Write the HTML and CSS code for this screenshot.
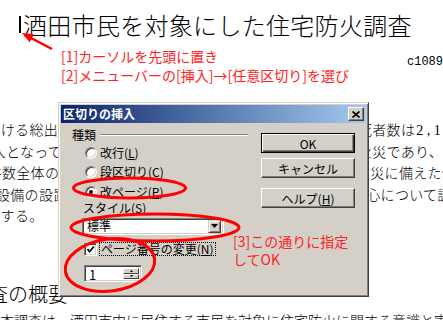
FILE: index.html
```html
<!DOCTYPE html>
<html lang="ja">
<head>
<meta charset="utf-8">
<title>区切りの挿入</title>
<link rel="stylesheet" href="styles.css">
</head>
<body>
<div class="page">
  <h1 class="doc-title"><span class="caret"></span>酒田市民を対象にした住宅防火調査</h1>
  <div class="notes">
    <div class="note-row"><span class="note">[1]カーソルを先頭に置き</span><span class="code">c1089</span></div>
    <div class="note-row"><span class="note">[2]メニューバーの[挿入]→[任意区切り]を選び</span></div>
  </div>
  <div class="para">
    <div class="ln"><span class="lt in1">おける総出火件数のうち住宅火災による</span><span class="rt">死者数は<span class="num">2,153</span>人</span></div>
    <div class="ln"><span class="lt in2">人となっており、その多くが住宅</span><span class="rt">火災であり、住宅</span></div>
    <div class="ln"><span class="lt in3">件数全体の半数を占める住宅</span><span class="rt sh3">火災に備えた住宅</span></div>
    <div class="ln"><span class="lt in4">設備の設置状況と防火意識を</span><span class="rt sh4">中心について調べ</span></div>
    <div class="ln"><span class="lt in5">とする。</span><span class="rt"></span></div>
  </div>
  <h2 class="doc-sub">調査の概要</h2>
  <p class="last">本調査は、酒田市内に居住する市民を対象に住宅防火に関する意識と実態を調べたものである。</p>

  <div class="dialog">
    <div class="titlebar">
      <span class="title">区切りの挿入</span>
      <span class="close"><svg width="8" height="7" viewBox="0 0 8 7"><path d="M0.5 0.5 L7.5 6.5 M7.5 0.5 L0.5 6.5" stroke="#000" stroke-width="1.7" fill="none"/></svg></span>
    </div>
    <div class="dlg-body">
      <div class="dlg-left">
        <div class="group-head"><span>種類</span><span class="etch"></span></div>
        <div class="radios">
          <div class="opt"><span class="radio"></span><span>改行(<u>L</u>)</span></div>
          <div class="opt"><span class="radio"></span><span>段区切り(<u>C</u>)</span></div>
          <div class="opt"><span class="radio on"></span><span>改ページ(<u>P</u>)</span></div>
        </div>
        <div class="field-label">スタイル(<u>S</u>)</div>
        <div class="combo">
          <span class="combo-val">標準</span>
          <span class="drop"><svg width="7" height="4" viewBox="0 0 7 4"><path d="M0 0 H7 L3.5 4 Z" fill="#000"/></svg></span>
        </div>
        <div class="check-row">
          <span class="checkbox"><svg width="9" height="9" viewBox="0 0 9 9"><polyline points="1.5,4 3.5,6.5 8,1.5" fill="none" stroke="#000" stroke-width="1.8"/></svg></span>
          <span class="focus">ページ番号の変更(<u>N</u>)</span>
        </div>
        <div class="spin">
          <span class="spin-val">1</span>
          <span class="spin-btns">
            <span class="sb"><svg width="3" height="2" viewBox="0 0 3 2"><path d="M1.5 0 L3 2 H0 Z" fill="#000"/></svg></span>
            <span class="sb"><svg width="3" height="2" viewBox="0 0 3 2"><path d="M0 0 H3 L1.5 2 Z" fill="#000"/></svg></span>
          </span>
        </div>
      </div>
      <div class="dlg-right">
        <button class="btn default">OK</button>
        <button class="btn">キャンセル</button>
        <button class="btn help">ヘルプ(<u>H</u>)</button>
      </div>
    </div>
  </div>

  <svg class="marks" width="443" height="320" viewBox="0 0 443 320">
    <line x1="52" y1="49" x2="31" y2="38" stroke="#f00" stroke-width="2.5"/>
    <polygon points="22,33 33.8,34.2 29.6,42.2" fill="#f00"/>
    <ellipse cx="129.5" cy="188" rx="56" ry="10" fill="none" stroke="#f00" stroke-width="3"/>
    <ellipse cx="155" cy="227.5" rx="84" ry="13.5" fill="none" stroke="#f00" stroke-width="3"/>
    <ellipse cx="110" cy="265" rx="45" ry="26" fill="none" stroke="#f00" stroke-width="3" transform="rotate(-8 110 265)"/>
  </svg>
  <div class="note3">[3]この通りに指定<br>してOK</div>
</div>
</body>
</html>
```
FILE: styles.css
```css
* { box-sizing: border-box; }
html, body { margin: 0; padding: 0; background: #fff; }
body { font-family: "Noto Sans CJK JP", sans-serif; }

.page {
  position: relative;
  width: 443px;
  height: 320px;
  overflow: hidden;
  color: #000;
}

/* document */
.doc-title {
  margin: 0;
  padding: 12px 0 0 19px;
  display: flex;
  font-family: "Liberation Serif", "Noto Sans CJK JP", serif;
  font-size: 24px;
  line-height: 30px;
  font-weight: 300;
  letter-spacing: 0.3px;
  white-space: nowrap;
}
.caret {
  align-self: flex-start;
  width: 2px;
  height: 17px;
  margin-top: 4px;
  margin-right: 2px;
  background: #000;
}

.notes {
  margin-top: 5px;
  padding-left: 61px;
  color: #f22;
  font-size: 14px;
  line-height: 18.5px;
}
.note-row {
  display: flex;
  justify-content: space-between;
  white-space: nowrap;
}
.code {
  align-self: flex-end;
  margin-bottom: -2px;
  color: #000;
  font-family: "Liberation Mono", monospace;
  font-size: 12px;
  line-height: 12px;
}

.para {
  margin-top: 36px;
  font-family: "Liberation Serif", "Noto Sans CJK JP", serif;
  font-size: 14px;
  line-height: 21.6px;
  font-weight: 300;
  letter-spacing: 0.3px;
}
.ln {
  display: grid;
  grid-template-columns: 358px 1fr;
  white-space: nowrap;
}
.lt, .rt { overflow: hidden; }
.num { margin-left: 1px; letter-spacing: 3.5px; }
.in1 { text-indent: -13.5px; }
.in2 { text-indent: -8.3px; }
.in3 { text-indent: -12.3px; }
.in4 { text-indent: -4px; }
.in5 { text-indent: -13.3px; }
.sh3 { text-indent: -2px; }
.sh4 { text-indent: -6px; }

.doc-sub {
  margin: 52px 0 0;
  font-family: "Liberation Serif", "Noto Sans CJK JP", serif;
  font-size: 20px;
  line-height: 30px;
  font-weight: 300;
  text-indent: -32px;
  white-space: nowrap;
}
.last {
  margin: 1px 0 0;
  font-family: "Liberation Serif", "Noto Sans CJK JP", serif;
  font-size: 14px;
  line-height: 21.6px;
  font-weight: 300;
  white-space: nowrap;
}

/* dialog */
.dialog {
  position: absolute;
  left: 58px;
  top: 102px;
  width: 311px;
  height: 195px;
  padding: 2px;
  display: flex;
  flex-direction: column;
  background: #d4d0c8;
  border: 1px solid;
  border-color: #d4d0c8 #404040 #404040 #d4d0c8;
  box-shadow: inset 1px 1px #fff, inset -1px -1px #808080;
  font-family: "Noto Sans CJK JP", sans-serif;
  font-size: 12px;
  line-height: 1;
}
.titlebar {
  height: 18px;
  display: flex;
  align-items: center;
  padding-left: 2px;
  background: linear-gradient(to right, #0a246a, #a6caf0);
}
.title {
  color: #fff;
  font-weight: bold;
  font-size: 12px;
}
.close {
  margin-left: auto;
  margin-right: 2px;
  width: 16px;
  height: 14px;
  display: flex;
  align-items: center;
  justify-content: center;
  background: #d4d0c8;
  border: 1px solid;
  border-color: #fff #404040 #404040 #fff;
  box-shadow: inset -1px -1px #808080;
}

.dlg-body {
  flex: 1;
  display: grid;
  grid-template-columns: 176px 94px;
  column-gap: 13px;
  padding: 0 11px;
  align-items: start;
}
.group-head {
  margin-top: 5px;
  height: 14px;
  display: flex;
  align-items: center;
  gap: 4px;
}
.etch {
  flex: 1;
  height: 2px;
  border-top: 1px solid #808080;
  border-bottom: 1px solid #fff;
}
.radios {
  margin-top: 1px;
  padding-left: 13px;
}
.opt {
  height: 19.5px;
  display: flex;
  align-items: center;
  gap: 3px;
}
.radio {
  position: relative;
  width: 12px;
  height: 12px;
  border-radius: 50%;
  background: #fff;
  border: 1px solid;
  border-color: #808080 #fff #fff #808080;
  box-shadow: inset 1px 1px #404040, inset -1px -1px #d4d0c8;
}
.radio.on::after {
  content: "";
  position: absolute;
  left: 3px;
  top: 3px;
  width: 4px;
  height: 4px;
  border-radius: 50%;
  background: #000;
}
.field-label {
  margin-left: 11px;
  line-height: 11px;
}
.combo {
  margin: 5px 0 0 10px;
  width: 142px;
  height: 17px;
  padding: 2px;
  display: flex;
  align-items: center;
  background: #fff;
  border: 1px solid;
  border-color: #808080 #fff #fff #808080;
  box-shadow: inset 1px 1px #404040, inset -1px -1px #d4d0c8;
}
.combo-val { padding-left: 2px; }
.drop {
  margin-left: auto;
  width: 13px;
  height: 13px;
  display: flex;
  align-items: center;
  justify-content: center;
  background: #d4d0c8;
  border: 1px solid;
  border-color: #d4d0c8 #404040 #404040 #d4d0c8;
  box-shadow: inset 1px 1px #fff, inset -1px -1px #808080;
}
.check-row {
  margin: 7.5px 0 0 12px;
  height: 14px;
  display: flex;
  align-items: center;
  gap: 2px;
}
.checkbox {
  width: 13px;
  height: 13px;
  display: flex;
  align-items: center;
  justify-content: center;
  background: #fff;
  border: 1px solid;
  border-color: #808080 #fff #fff #808080;
  box-shadow: inset 1px 1px #404040, inset -1px -1px #d4d0c8;
}
.focus {
  border: 1px dotted #000;
  padding: 0 1px;
  line-height: 12px;
}
.spin {
  margin: 9px 0 0 12px;
  width: 58px;
  height: 17px;
  padding: 2px;
  display: flex;
  background: #fff;
  border: 1px solid;
  border-color: #808080 #fff #fff #808080;
  box-shadow: inset 1px 1px #404040, inset -1px -1px #d4d0c8;
}
.spin-val {
  flex: 1;
  padding-left: 2px;
  font-size: 13px;
  line-height: 13px;
}
.spin-btns {
  width: 16px;
  display: flex;
  flex-direction: column;
}
.sb {
  flex: 1;
  display: flex;
  align-items: center;
  justify-content: center;
  background: #d4d0c8;
  border: 1px solid;
  border-color: #fff #404040 #404040 #fff;
}

.dlg-right {
  display: flex;
  flex-direction: column;
  padding-top: 10px;
}
.btn {
  width: 94px;
  height: 20px;
  padding: 0;
  font-family: "Noto Sans CJK JP", sans-serif;
  font-size: 12px;
  color: #000;
  background: #d4d0c8;
  border: 1px solid;
  border-color: #fff #404040 #404040 #fff;
  box-shadow: inset -1px -1px #808080;
}
.btn + .btn { margin-top: 5px; }
.btn.help { margin-top: 10px; }
.btn.default {
  border-color: #000;
  box-shadow: inset 1px 1px #fff, inset -1px -1px #404040, inset -2px -2px #808080;
}

/* annotations */
.marks {
  position: absolute;
  left: 0;
  top: 0;
  pointer-events: none;
}
.note3 {
  position: absolute;
  left: 233px;
  top: 232px;
  color: #f22;
  font-size: 14px;
  line-height: 18px;
  white-space: nowrap;
}
```
